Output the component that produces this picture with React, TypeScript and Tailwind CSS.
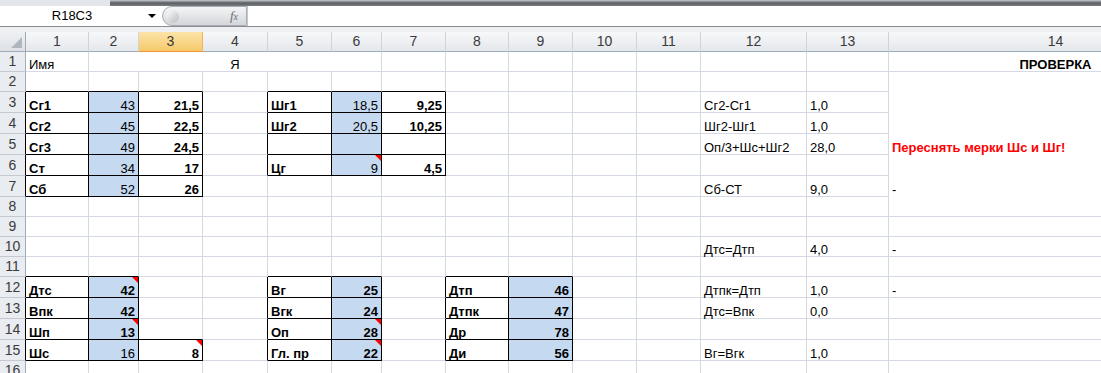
import React from "react";

type Cell = {
  v?: string;
  b?: boolean;
  blue?: boolean;
  al?: "l" | "r" | "c";
  red?: boolean;
  tri?: boolean;
  span?: number;
};

const HEADS = ["1", "2", "3", "4", "5", "6", "7", "8", "9", "10", "11", "12", "13", "14"];

// cells keyed "row,col"
const cells: Record<string, Cell> = {
  "1,1": { v: "Имя" },
  "1,2": { v: "Я", al: "c", span: 5 },
  "1,14": { v: "ПРОВЕРКА", b: true, al: "c" },

  "3,1": { v: "Сг1", b: true }, "3,2": { v: "43", blue: true, al: "r" }, "3,3": { v: "21,5", b: true, al: "r" },
  "4,1": { v: "Сг2", b: true }, "4,2": { v: "45", blue: true, al: "r" }, "4,3": { v: "22,5", b: true, al: "r" },
  "5,1": { v: "Сг3", b: true }, "5,2": { v: "49", blue: true, al: "r" }, "5,3": { v: "24,5", b: true, al: "r" },
  "6,1": { v: "Ст", b: true }, "6,2": { v: "34", blue: true, al: "r" }, "6,3": { v: "17", b: true, al: "r" },
  "7,1": { v: "Сб", b: true }, "7,2": { v: "52", blue: true, al: "r" }, "7,3": { v: "26", b: true, al: "r" },

  "3,5": { v: "Шг1", b: true }, "3,6": { v: "18,5", blue: true, al: "r" }, "3,7": { v: "9,25", b: true, al: "r" },
  "4,5": { v: "Шг2", b: true }, "4,6": { v: "20,5", blue: true, al: "r" }, "4,7": { v: "10,25", b: true, al: "r" },
  "5,6": { blue: true },
  "6,5": { v: "Цг", b: true }, "6,6": { v: "9", blue: true, al: "r", tri: true }, "6,7": { v: "4,5", b: true, al: "r" },

  "12,1": { v: "Дтс", b: true }, "12,2": { v: "42", b: true, blue: true, al: "r", tri: true },
  "13,1": { v: "Впк", b: true }, "13,2": { v: "42", b: true, blue: true, al: "r" },
  "14,1": { v: "Шп", b: true }, "14,2": { v: "13", b: true, blue: true, al: "r", tri: true },
  "15,1": { v: "Шс", b: true }, "15,2": { v: "16", blue: true, al: "r" }, "15,3": { v: "8", b: true, al: "r", tri: true },

  "12,5": { v: "Вг", b: true }, "12,6": { v: "25", b: true, blue: true, al: "r" },
  "13,5": { v: "Вгк", b: true }, "13,6": { v: "24", b: true, blue: true, al: "r" },
  "14,5": { v: "Оп", b: true }, "14,6": { v: "28", b: true, blue: true, al: "r", tri: true },
  "15,5": { v: "Гл. пр", b: true }, "15,6": { v: "22", b: true, blue: true, al: "r", tri: true },

  "12,8": { v: "Дтп", b: true }, "12,9": { v: "46", b: true, blue: true, al: "r" },
  "13,8": { v: "Дтпк", b: true }, "13,9": { v: "47", b: true, blue: true, al: "r" },
  "14,8": { v: "Др", b: true }, "14,9": { v: "78", b: true, blue: true, al: "r" },
  "15,8": { v: "Ди", b: true }, "15,9": { v: "56", b: true, blue: true, al: "r" },

  "3,12": { v: "Сг2-Сг1" }, "3,13": { v: "1,0" },
  "4,12": { v: "Шг2-Шг1" }, "4,13": { v: "1,0" },
  "5,12": { v: "Оп/3+Шс+Шг2" }, "5,13": { v: "28,0" }, "5,14": { v: "Переснять мерки Шс и Шг!", b: true, red: true },
  "7,12": { v: "Сб-СТ" }, "7,13": { v: "9,0" }, "7,14": { v: "-" },
  "10,12": { v: "Дтс=Дтп" }, "10,13": { v: "4,0" }, "10,14": { v: "-" },
  "12,12": { v: "Дтпк=Дтп" }, "12,13": { v: "1,0" }, "12,14": { v: "-" },
  "13,12": { v: "Дтс=Впк" }, "13,13": { v: "0,0" },
  "15,12": { v: "Вг=Вгк" }, "15,13": { v: "1,0" },
};

function boxed(r: number, c: number) {
  if (r >= 3 && r <= 7 && c >= 1 && c <= 3) return true;
  if (r >= 3 && r <= 6 && c >= 5 && c <= 7) return true;
  if (r >= 12 && r <= 15 && (c === 1 || c === 2 || c === 5 || c === 6 || c === 8 || c === 9)) return true;
  if (r === 15 && c === 3) return true;
  return false;
}

// white-filled area without gridlines (col 14, rows 2-7)
function noGrid(r: number, c: number) {
  return c === 14 && r >= 2 && r <= 7;
}

function GridCell({ r, c }: { r: number; c: number }) {
  const cell = cells[`${r},${c}`] || {};
  const span = cell.span || 1;
  const last = c + span - 1;
  const rightBlack = boxed(r, last) || boxed(r, last + 1);
  const bottomBlack = boxed(r, c) || boxed(r + 1, c);
  const rightNone = noGrid(r, last) && !rightBlack;
  const bottomNone = noGrid(r, c) && !bottomBlack;

  const cls = [
    "relative flex items-end overflow-visible whitespace-nowrap px-[3px] border-r border-b leading-[13px]",
    rightBlack ? "border-r-black" : rightNone ? "border-r-white" : "border-r-[#d4d9e3]",
    bottomBlack ? "border-b-black" : bottomNone ? "border-b-white" : "border-b-[#d4d9e3]",
    cell.blue ? "bg-[#c5d9f1]" : "bg-white",
    cell.al === "r" ? "justify-end" : cell.al === "c" ? "justify-center" : "justify-start",
    cell.b ? "font-bold" : "font-normal",
    cell.red ? "text-[#ff0000]" : "text-black",
    span === 5 ? "col-span-5" : "",
  ].join(" ");

  return (
    <div className={cls}>
      <span>{cell.v}</span>
      {cell.tri && (
        <span className="absolute right-0 top-0 h-0 w-0 border-l-[6px] border-t-[6px] border-l-transparent border-t-[#ff0000]" />
      )}
    </div>
  );
}

function RowHead({ r }: { r: number }) {
  const black = boxed(r, 1);
  return (
    <div
      className={`flex items-center justify-center border-b border-r border-b-[#c5c9cf] bg-[#e9ecf0] text-[14px] text-[#3b3b3b] ${
        black ? "border-r-black" : "border-r-[#9eabb8]"
      }`}
    >
      {r}
    </div>
  );
}

function FormulaBar() {
  return (
    <div className="flex h-[27px] flex-col">
      <div className="flex h-[6px]">
        <div className="w-[110px] bg-[#e3e6ea]" />
        <div className="flex-1 bg-gradient-to-b from-[#c9cdd2] via-[#5b5e63] to-[#7a7d82]" />
      </div>
      <div className="flex h-[21px] items-stretch border-b border-[#8a8d92] bg-white">
        <div className="relative flex w-[162px] items-center justify-center pr-[18px] text-[13px] text-black">
          R18C3
          <span className="absolute right-[6px] top-[8px] h-0 w-0 border-x-[4px] border-t-[4px] border-x-transparent border-t-black" />
        </div>
        <div className="relative flex w-[85px] items-center justify-end rounded-l-full border border-[#a9adb3] bg-gradient-to-b from-[#f4f5f6] to-[#d3d6da] pr-[8px]">
          <span className="absolute left-[3px] top-[3px] h-[13px] w-[13px] rounded-full bg-gradient-to-br from-[#ffffff] to-[#b9bcc0]" />
          <span className="font-['Liberation_Serif',serif] text-[13px] italic text-[#6b6e73]">
            f<span className="text-[10px]">x</span>
          </span>
        </div>
        <div className="flex-1 border-l border-[#c5c9cf]" />
      </div>
    </div>
  );
}

export default function App() {
  const rows = Array.from({ length: 16 }, (_, i) => i + 1);
  return (
    <div className="h-[373px] w-[1101px] overflow-hidden bg-white font-['Liberation_Sans',Arial,sans-serif] text-[13px]">
      <FormulaBar />
      <div className="h-[5px] bg-[#eef0f3]" />
      <div className="grid w-[1223px] grid-cols-[26px_63px_50px_64px_65px_64px_50px_64px_63px_64px_64px_64px_106px_82px_334px] grid-rows-[20px_20px_20px_21px_21px_21px_21px_21px_20px_20px_20px_20px_21px_21px_21px_21px_20px]">
        {/* header row */}
        <div className="relative border-b border-r border-[#9eabb8] bg-gradient-to-b from-[#eef0f3] to-[#dde1e6]">
          <span className="absolute bottom-[3px] right-[3px] h-0 w-0 border-b-[11px] border-l-[11px] border-b-[#b1b6bc] border-l-transparent" />
        </div>
        {HEADS.map((h) =>
          h === "3" ? (
            <div
              key={h}
              className="flex items-center justify-center border-b border-r border-b-[#f29436] border-r-[#f2b45a] bg-gradient-to-b from-[#fbe3a8] to-[#f6c96a] text-[14px] text-[#3b3b3b]"
            >
              {h}
            </div>
          ) : (
            <div
              key={h}
              className="flex items-center justify-center border-b border-r border-b-[#9eabb8] border-r-[#d0d4da] bg-gradient-to-b from-[#f7f8fa] to-[#e4e7eb] text-[14px] text-[#3b3b3b]"
            >
              {h}
            </div>
          )
        )}
        {rows.map((r) => (
          <React.Fragment key={r}>
            <RowHead r={r} />
            {HEADS.map((_, i) => {
              const c = i + 1;
              if (r === 1 && c >= 3 && c <= 6) return null;
              return <GridCell key={c} r={r} c={c} />;
            })}
          </React.Fragment>
        ))}
      </div>
    </div>
  );
}
